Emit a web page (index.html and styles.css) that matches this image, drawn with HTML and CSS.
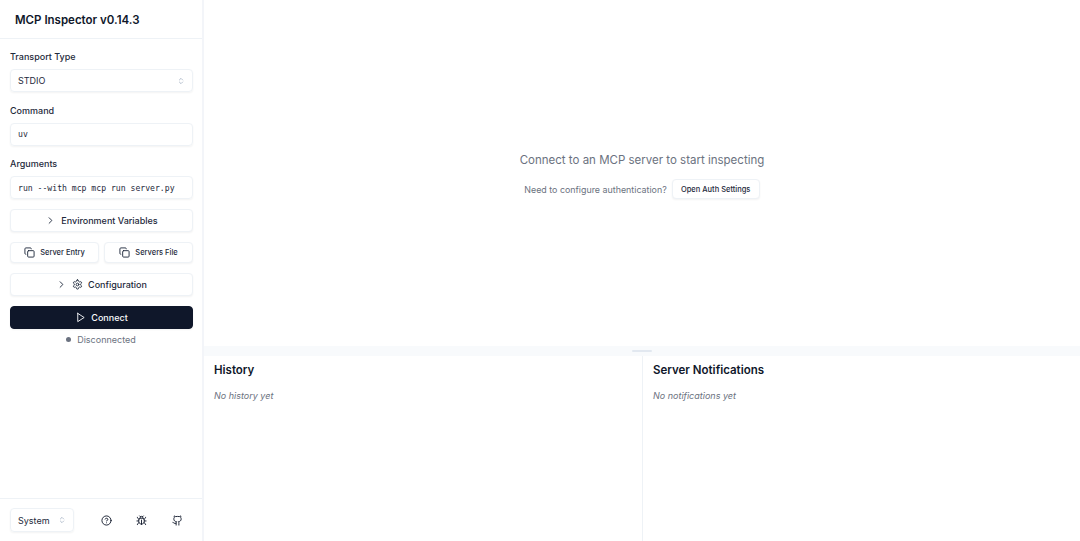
FILE: index.html
```html
<!DOCTYPE html>
<html lang="en">
<head>
    <meta charset="UTF-8">
    <meta name="viewport" content="width=device-width, initial-scale=1.0">
    <title>MCP Inspector</title>
    <link rel="stylesheet" href="styles.css">
</head>
<body>
    <div class="app">
        <aside class="sidebar">
            <div class="sidebar-header">
                <h1 class="app-title">MCP Inspector v0.14.3</h1>
            </div>
            <div class="sidebar-body">
                <div class="field">
                    <label class="field-label">Transport Type</label>
                    <div class="control select-control">
                        <span>STDIO</span>
                        <svg class="icon-updown" viewBox="0 0 24 24"><path d="m7 15 5 5 5-5"/><path d="m7 9 5-5 5 5"/></svg>
                    </div>
                </div>
                <div class="field">
                    <label class="field-label">Command</label>
                    <div class="control mono">uv</div>
                </div>
                <div class="field field-last">
                    <label class="field-label">Arguments</label>
                    <div class="control mono">run --with mcp mcp run server.py</div>
                </div>
                <button class="btn btn-wide">
                    <svg class="icon" viewBox="0 0 24 24"><path d="m9 18 6-6-6-6"/></svg>
                    Environment Variables
                </button>
                <div class="btn-pair">
                    <button class="btn btn-small">
                        <svg class="icon" viewBox="0 0 24 24"><rect x="8" y="8" width="14" height="14" rx="2"/><path d="M4 16c-1.1 0-2-.9-2-2V4c0-1.1.9-2 2-2h10c1.1 0 2 .9 2 2"/></svg>
                        Server Entry
                    </button>
                    <button class="btn btn-small">
                        <svg class="icon" viewBox="0 0 24 24"><rect x="8" y="8" width="14" height="14" rx="2"/><path d="M4 16c-1.1 0-2-.9-2-2V4c0-1.1.9-2 2-2h10c1.1 0 2 .9 2 2"/></svg>
                        Servers File
                    </button>
                </div>
                <button class="btn btn-wide">
                    <svg class="icon" viewBox="0 0 24 24"><path d="m9 18 6-6-6-6"/></svg>
                    <svg class="icon" viewBox="0 0 24 24"><path d="M12.22 2h-.44a2 2 0 0 0-2 2v.18a2 2 0 0 1-1 1.73l-.43.25a2 2 0 0 1-2 0l-.15-.08a2 2 0 0 0-2.73.73l-.22.38a2 2 0 0 0 .73 2.73l.15.1a2 2 0 0 1 1 1.72v.51a2 2 0 0 1-1 1.74l-.15.09a2 2 0 0 0-.73 2.73l.22.38a2 2 0 0 0 2.73.73l.15-.08a2 2 0 0 1 2 0l.43.25a2 2 0 0 1 1 1.73V20a2 2 0 0 0 2 2h.44a2 2 0 0 0 2-2v-.18a2 2 0 0 1 1-1.73l.43-.25a2 2 0 0 1 2 0l.15.08a2 2 0 0 0 2.73-.73l.22-.39a2 2 0 0 0-.73-2.73l-.15-.08a2 2 0 0 1-1-1.74v-.5a2 2 0 0 1 1-1.74l.15-.09a2 2 0 0 0 .73-2.73l-.22-.38a2 2 0 0 0-2.73-.73l-.15.08a2 2 0 0 1-2 0l-.43-.25a2 2 0 0 1-1-1.73V4a2 2 0 0 0-2-2z"/><circle cx="12" cy="12" r="3"/></svg>
                    Configuration
                </button>
                <button class="btn btn-wide btn-primary">
                    <svg class="icon" viewBox="0 0 24 24"><polygon points="6 3 20 12 6 21 6 3"/></svg>
                    Connect
                </button>
                <div class="status">
                    <span class="status-dot"></span>
                    <span>Disconnected</span>
                </div>
            </div>
            <div class="sidebar-footer">
                <div class="control theme-select">
                    <span>System</span>
                    <svg class="icon-updown" viewBox="0 0 24 24"><path d="m7 15 5 5 5-5"/><path d="m7 9 5-5 5 5"/></svg>
                </div>
                <div class="footer-links">
                    <svg class="icon" viewBox="0 0 24 24"><circle cx="12" cy="12" r="10"/><path d="M9.09 9a3 3 0 0 1 5.83 1c0 2-3 3-3 3"/><path d="M12 17h.01"/></svg>
                    <svg class="icon" viewBox="0 0 24 24"><path d="m8 2 1.88 1.88"/><path d="M14.12 3.88 16 2"/><path d="M9 7.13v-1a3.003 3.003 0 1 1 6 0v1"/><path d="M12 20c-3.3 0-6-2.7-6-6v-3a4 4 0 0 1 4-4h4a4 4 0 0 1 4 4v3c0 3.3-2.7 6-6 6"/><path d="M12 20v-9"/><path d="M6.53 9C4.6 8.8 3 7.1 3 5"/><path d="M6 13H2"/><path d="M3 21c0-2.1 1.7-3.9 3.8-4"/><path d="M20.97 5c0 2.1-1.6 3.8-3.5 4"/><path d="M22 13h-4"/><path d="M17.2 17c2.1.1 3.8 1.9 3.8 4"/></svg>
                    <svg class="icon" viewBox="0 0 24 24"><path d="M15 22v-4a4.8 4.8 0 0 0-1-3.5c3 0 6-2 6-5.5.08-1.25-.27-2.48-1-3.5.28-1.15.28-2.35 0-3.5 0 0-1 0-3 1.5-2.64-.5-5.36-.5-8 0C6 2 5 2 5 2c-.3 1.15-.3 2.35 0 3.5A5.403 5.403 0 0 0 4 9c0 3.5 3 5.5 6 5.5-.39.49-.68 1.05-.85 1.65-.17.6-.22 1.23-.15 1.85v4"/><path d="M9 18c-4.51 2-5-2-7-2"/></svg>
                </div>
            </div>
        </aside>
        <main class="main">
            <section class="welcome">
                <p class="welcome-title">Connect to an MCP server to start inspecting</p>
                <div class="welcome-auth">
                    <span>Need to configure authentication?</span>
                    <button class="btn btn-auth">Open Auth Settings</button>
                </div>
            </section>
            <div class="resizer"><span class="resizer-handle"></span></div>
            <section class="panels">
                <div class="panel">
                    <h2 class="panel-title">History</h2>
                    <p class="panel-empty">No history yet</p>
                </div>
                <div class="panel">
                    <h2 class="panel-title">Server Notifications</h2>
                    <p class="panel-empty">No notifications yet</p>
                </div>
            </section>
        </main>
    </div>
</body>
</html>
```

FILE: styles.css
```css
* {
    box-sizing: border-box;
}
body {
    margin: 0;
    font-family: Inter, 'Noto Sans', sans-serif;
    color: #0f172a;
    background-color: white;
}
svg {
    fill: none;
    stroke: currentColor;
    stroke-width: 2;
    stroke-linecap: round;
    stroke-linejoin: round;
    flex-shrink: 0;
}
.icon {
    width: 11px;
    height: 11px;
}
.icon-updown {
    width: 8px;
    height: 8px;
    color: #94a3b8;
}
.app {
    display: flex;
    height: 541px;
    overflow: hidden;
}
.sidebar {
    width: 204px;
    flex-shrink: 0;
    display: flex;
    flex-direction: column;
    border-right: 2px solid #f3f5f9;
}
.sidebar-header {
    height: 39px;
    padding: 1px 15px 0;
    display: flex;
    align-items: center;
    border-bottom: 1px solid #eef2f6;
}
.app-title {
    margin: 0;
    font-size: 11.5px;
    font-weight: 600;
}
.sidebar-body {
    flex: 1;
    padding: 11px 9px 0 10px;
    display: flex;
    flex-direction: column;
}
.field {
    display: flex;
    flex-direction: column;
    gap: 6px;
    margin-bottom: 11.5px;
}
.field-last {
    margin-bottom: 10px;
}
.field-label {
    font-size: 9px;
    line-height: 13px;
    font-weight: 500;
    color: #1e293b;
}
.control {
    height: 23px;
    padding: 0 7px;
    display: flex;
    align-items: center;
    font-size: 9px;
    color: #1e293b;
    border: 1px solid #eef2f6;
    border-radius: 4px;
    box-shadow: 0 1px 2px rgba(0, 0, 0, 0.05);
}
.select-control {
    justify-content: space-between;
}
.mono {
    font-family: 'DejaVu Sans Mono', monospace;
    font-size: 8.15px;
}
.btn {
    display: flex;
    align-items: center;
    justify-content: center;
    gap: 5px;
    font-family: inherit;
    font-weight: 500;
    color: #1e293b;
    background-color: white;
    border: 1px solid #eef2f6;
    border-radius: 4px;
    box-shadow: 0 1px 2px rgba(0, 0, 0, 0.05);
    padding: 0;
}
.btn-wide {
    width: 100%;
    height: 23px;
    font-size: 9px;
    margin-bottom: 10px;
}
.btn-pair {
    display: grid;
    grid-template-columns: 1fr 1fr;
    gap: 5px;
    margin-bottom: 9.5px;
}
.btn-small {
    height: 21px;
    font-size: 7.5px;
}
.btn-primary {
    color: #f8fafc;
    background-color: #0f172a;
    border-color: #0f172a;
    margin-bottom: 5.5px;
}
.status {
    display: flex;
    align-items: center;
    justify-content: center;
    gap: 6px;
    padding-right: 1px;
    font-size: 9px;
    color: #6b7280;
}
.status-dot {
    width: 5px;
    height: 5px;
    border-radius: 50%;
    background-color: #6b7280;
}
.sidebar-footer {
    height: 43px;
    padding: 9px 9px 0 10px;
    display: flex;
    justify-content: space-between;
    border-top: 1px solid #eef2f6;
}
.theme-select {
    width: 64px;
    height: 24px;
    justify-content: space-between;
}
.footer-links {
    display: flex;
    align-items: center;
    height: 24px;
    gap: 24.5px;
    padding-right: 10.5px;
}
.main {
    flex: 1;
    display: flex;
    flex-direction: column;
    min-width: 0;
}
.welcome {
    height: 346px;
    padding-top: 6px;
    display: flex;
    flex-direction: column;
    align-items: center;
    justify-content: center;
    gap: 12px;
    color: #6b7280;
}
.welcome-title {
    margin: 0;
    font-size: 11.5px;
}
.welcome-auth {
    display: flex;
    align-items: center;
    gap: 5px;
    font-size: 8.9px;
}
.btn-auth {
    width: 88px;
    height: 20px;
    font-size: 7.5px;
}
.resizer {
    height: 10px;
    background-color: #f8fafc;
    display: flex;
    justify-content: center;
}
.resizer-handle {
    width: 20px;
    height: 2px;
    margin-top: 4px;
    background-color: #e2e8f0;
    border-radius: 1px;
}
.panels {
    flex: 1;
    display: grid;
    grid-template-columns: 1fr 1fr;
}
.panel {
    padding: 6px 10px;
}
.panel:last-child {
    border-left: 1px solid #eef2f6;
}
.panel-title {
    margin: 0 0 12px;
    font-size: 11.5px;
    line-height: 16px;
    font-weight: 600;
}
.panel-empty {
    margin: 0;
    font-size: 9px;
    font-style: italic;
    color: #6b7280;
}
```
